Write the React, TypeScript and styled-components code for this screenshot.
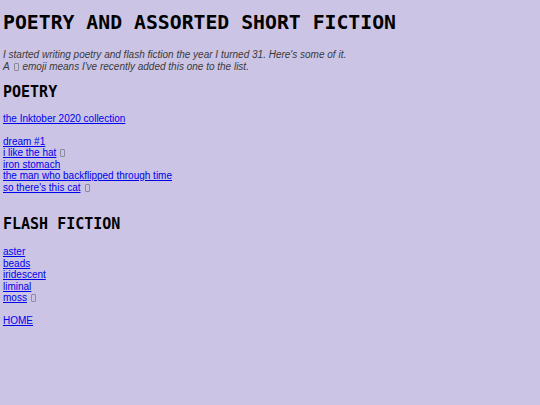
import React from "react";
import styled, { createGlobalStyle } from "styled-components";

const GlobalStyle = createGlobalStyle`
  html, body {
    margin: 0;
    padding: 0;
    background: #cbc4e4;
  }
  body {
    font-family: "Liberation Sans", Arial, sans-serif;
    font-size: 10px;
    color: #000;
  }
`;

const Page = styled.main`
  padding: 11px 3px 20px;
  display: flex;
  flex-direction: column;
  align-items: flex-start;
`;

const Title = styled.h1`
  margin: 0;
  font-family: "DejaVu Sans Mono", monospace;
  font-size: 19.8px;
  line-height: 24px;
  font-weight: bold;
  letter-spacing: 0;
`;

const Intro = styled.p`
  margin: 14px 0 0;
  font-style: italic;
  font-size: 10px;
  line-height: 12px;
  color: #3a3a3a;
`;

const SectionTitle = styled.h2<{ $gap: number }>`
  margin: ${(p) => p.$gap}px 0 0;
  font-family: "DejaVu Sans Mono", monospace;
  font-size: 15px;
  line-height: 18px;
  font-weight: bold;
`;

const LinkGroup = styled.div<{ $gap: number }>`
  margin-top: ${(p) => p.$gap}px;
  display: flex;
  flex-direction: column;
  align-items: flex-start;
`;

const Line = styled.div`
  font-size: 10px;
  line-height: 11.5px;
  white-space: nowrap;
`;

const Link = styled.a`
  color: #0000ee;
  text-decoration: underline;
`;

/* the emoji shows as a missing-glyph box in the reference */
const Tofu = styled.span`
  display: inline-block;
  width: 3px;
  height: 6px;
  margin: 0 1px 0 4px;
  border: 1px solid #8e8a9e;
  border-radius: 1px;
  vertical-align: -1px;
`;

type Item = { title: string; isNew?: boolean };

const Entry = ({ title, isNew }: Item) => (
  <Line>
    <Link href="#">{title}</Link>
    {isNew && <Tofu aria-label="new" />}
  </Line>
);

const poetryA: Item[] = [{ title: "the Inktober 2020 collection" }];
const poetryB: Item[] = [
  { title: "dream #1" },
  { title: "i like the hat", isNew: true },
  { title: "iron stomach" },
  { title: "the man who backflipped through time" },
  { title: "so there's this cat", isNew: true },
];
const flash: Item[] = [
  { title: "aster" },
  { title: "beads" },
  { title: "iridescent" },
  { title: "liminal" },
  { title: "moss", isNew: true },
];

export default function App() {
  return (
    <>
      <GlobalStyle />
      <Page>
        <Title>POETRY AND ASSORTED SHORT FICTION</Title>
        <Intro>
          I started writing poetry and flash fiction the year I turned 31. Here's some of it.
          <br />A<Tofu aria-label="new" /> emoji means I've recently added this one to the list.
        </Intro>
        <SectionTitle $gap={10}>POETRY</SectionTitle>
        <LinkGroup $gap={11.5}>
          {poetryA.map((i) => (
            <Entry key={i.title} {...i} />
          ))}
        </LinkGroup>
        <LinkGroup $gap={11.5}>
          {poetryB.map((i) => (
            <Entry key={i.title} {...i} />
          ))}
        </LinkGroup>
        <SectionTitle $gap={22}>FLASH FICTION</SectionTitle>
        <LinkGroup $gap={13}>
          {flash.map((i) => (
            <Entry key={i.title} {...i} />
          ))}
        </LinkGroup>
        <LinkGroup $gap={11.5}>
          <Entry title="HOME" />
        </LinkGroup>
      </Page>
    </>
  );
}
